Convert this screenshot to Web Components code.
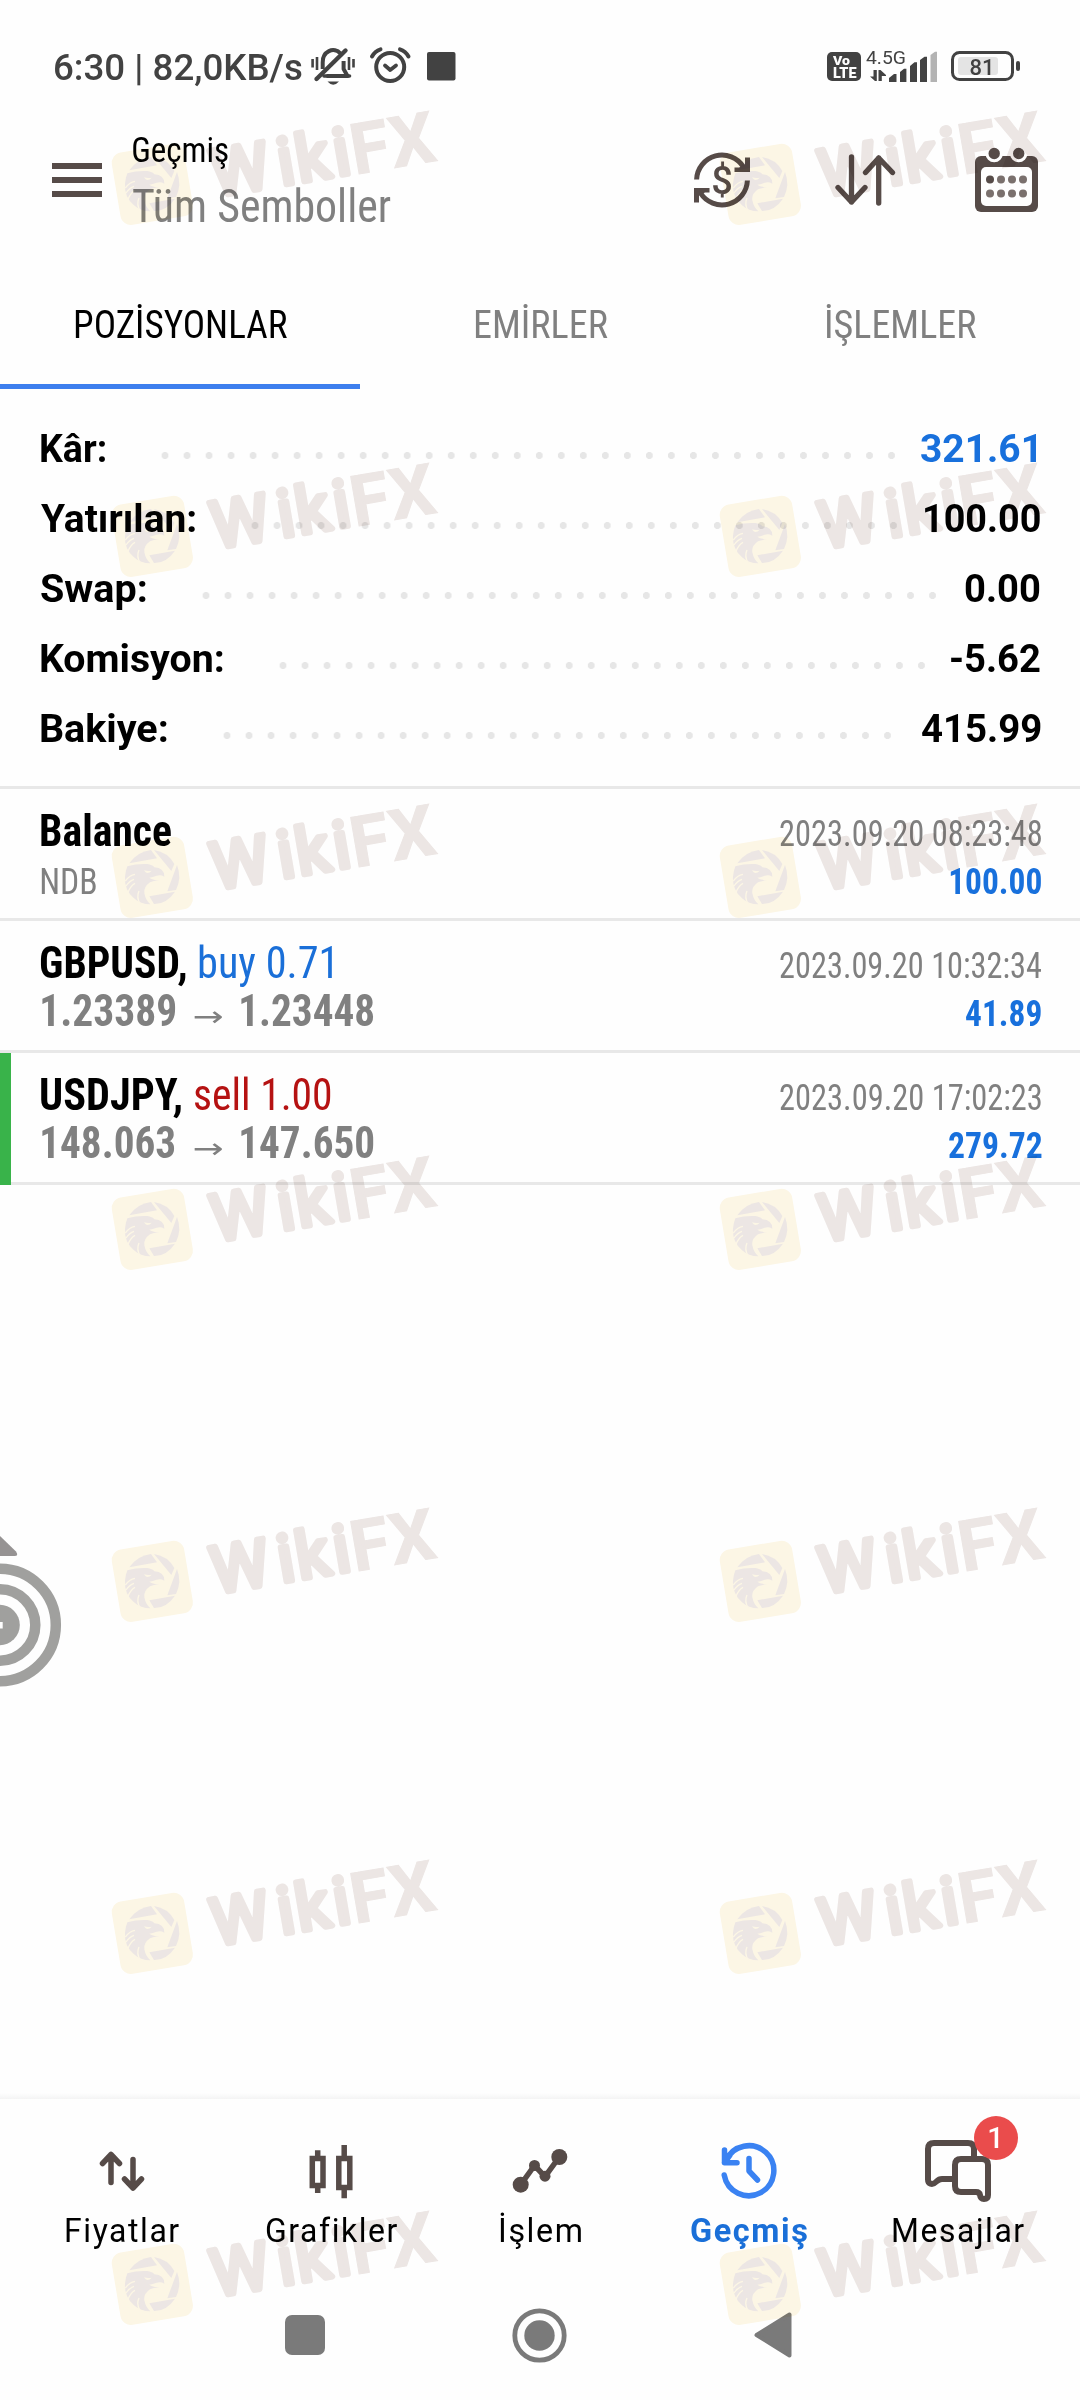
<!DOCTYPE html>
<html lang="tr">
<head>
<meta charset="utf-8">
<title>Geçmiş</title>
<style>
    body {
        margin: 0;
        background: #fefefe;
        font-family: Roboto, "Liberation Sans", sans-serif;
        color: #000;
    }
</style>
</head>
<body>
<history-page></history-page>

<script>
// Text squeezed so that its glyphs fill exactly `w` pixels
class FitText extends HTMLElement {
    constructor() {
        super();
        this.attachShadow({ mode: 'open' });
        this.shadowRoot.innerHTML = `
            <style>
                :host { display: block; flex: none; white-space: nowrap; }
                span { display: inline-block; transform-origin: 0 0; }
            </style>
            <span><slot></slot></span>
        `;
    }

    connectedCallback() {
        const width = parseFloat(this.getAttribute('w'));
        const style = getComputedStyle(this);
        const ctx = document.createElement('canvas').getContext('2d');
        const stretch = style.fontStretch === '75%' ? 'condensed' : 'normal';
        ctx.font = `${style.fontWeight} ${style.fontSize} ${style.fontFamily}`;
        ctx.fontStretch = stretch;
        const spacing = parseFloat(style.letterSpacing) || 0;
        const text = this.textContent;
        const m = ctx.measureText(text);
        const ink = m.actualBoundingBoxLeft + m.actualBoundingBoxRight + spacing * (text.length - 1);
        const scale = width / ink;
        this.style.width = width + 'px';
        this.shadowRoot.querySelector('span').style.transform =
            `translateX(${m.actualBoundingBoxLeft * scale}px) scaleX(${scale})`;
    }
}
customElements.define('fit-text', FitText);

class StatusBar extends HTMLElement {
    constructor() {
        super();
        this.attachShadow({ mode: 'open' });
        this.shadowRoot.innerHTML = `
            <style>
                :host {
                    display: flex; align-items: flex-start; height: 100px; box-sizing: border-box;
                    padding: 47px 60px 0 55px; color: #424242;
                }
                svg { display: block; flex: none; overflow: visible; }
                .clock { font-size: 36.5px; line-height: 42px; font-weight: 480; margin-right: 9px; }
                .bell { margin: 1px 15px 0 0; }
                .alarm { margin-right: 16px; }
                .right { margin: 3px 0 0 auto; }
            </style>
            <fit-text class="clock" w="247">6:30 | 82,0KB/s</fit-text>
            <svg class="bell" width="44" height="38" fill="none" stroke="#424242" stroke-width="4">
                <path d="M11.7 21V14.5A10.5 12 0 0 1 29.5 5.5M32.6 13V21L36.5 28H15.5" stroke-linejoin="round"/>
                <path d="M5.5 31 34.5 2.5" stroke-width="4.4" stroke-linecap="round"/>
                <path d="M13 28H38.5" stroke-width="3.6" stroke-linecap="round"/>
                <path d="M16.5 33.5H28Q22.2 40 16.5 33.5Z" fill="#424242" stroke="none"/>
                <path d="M1.6 11V19.5M6 9V22M38 9V22M42.5 11V19.5" stroke-width="2.6"/>
            </svg>
            <svg class="alarm" width="41" height="37" fill="none" stroke="#424242" stroke-linecap="round">
                <circle cx="20.2" cy="20" r="14" stroke-width="4"/>
                <path d="M15 18.5 20.2 23 26 18.5" stroke-width="3.8" stroke-linejoin="round"/>
                <path d="M2 9.5Q5 4 10.5 2.3M38.5 9.5Q35.5 4 30 2.3" stroke-width="4"/>
            </svg>
            <svg width="29" height="34"><rect y="5" width="28.5" height="28.5" rx="2" fill="#424242"/></svg>
            <svg class="right" width="193" height="32" font-family="Roboto, sans-serif" fill="#424242">
                <rect x="0" y="2" width="34" height="29" rx="5"/>
                <text x="6" y="14.7" font-size="13.5" font-weight="900" fill="#fefefe" textLength="17" lengthAdjust="spacingAndGlyphs">Vo</text>
                <text x="6" y="28" font-size="14" font-weight="900" fill="#fefefe" textLength="23.5" lengthAdjust="spacingAndGlyphs">LTE</text>
                <text x="39" y="14" font-size="19" textLength="40" lengthAdjust="spacingAndGlyphs">4.5G</text>
                <path d="M46.5 20H49.8V31H48L43 26.5H46.5ZM51.5 20H53.5L59 25V26H54.8V31H51.5Z"/>
                <path d="M62 32V28L67 24H69.5V32ZM73 32V22L77 18.7H79.4V32ZM83 32V16L87.5 12.3H90V32ZM93 32V10L97.5 6.7H100V32Z"/>
                <path d="M103.5 32V5L108 1.7H110V32Z" fill="#b3b3b3"/>
                <rect x="131" y="7" width="40" height="18" rx="3" fill="#e4e4e4"/>
                <rect x="125.5" y="2.5" width="60" height="27" rx="7" fill="none" stroke="#424242" stroke-width="3"/>
                <rect x="189" y="11" width="4" height="10" rx="2"/>
                <text x="142.5" y="25" font-size="22.5" font-weight="500" textLength="25" lengthAdjust="spacingAndGlyphs">81</text>
            </svg>
        `;
    }
}
customElements.define('status-bar', StatusBar);

class AppHeader extends HTMLElement {
    constructor() {
        super();
        this.attachShadow({ mode: 'open' });
        this.shadowRoot.innerHTML = `
            <style>
                :host {
                    display: flex; align-items: center; height: 160px; box-sizing: border-box;
                    padding: 0 42px 0 52px;
                }
                svg { display: block; flex: none; overflow: visible; }
                .titles {
                    flex: 1; margin-left: 31px; display: flex; flex-direction: column; gap: 10px;
                    padding-top: 2px; font-stretch: condensed;
                }
                .title { font-size: 35.5px; line-height: 40px; }
                .sub { font-size: 46.5px; line-height: 52px; font-weight: 430; color: #808080; }
                .sort { margin: 0 80px 0 85px; }
            </style>
            <svg width="50" height="34" fill="#564b48">
                <path d="M0 0H50V6H0ZM0 14H50V20H0ZM0 28H50V34H0Z"/>
            </svg>
            <div class="titles">
                <fit-text class="title" w="95">Geçmiş</fit-text>
                <fit-text class="sub" w="258">Tüm Semboller</fit-text>
            </div>
            <svg width="56" height="56" fill="none" stroke="#564b48" stroke-width="5">
                <g id="half">
                    <path d="M2.6 27.5A25.4 25.4 0 0 1 49.5 15"/>
                    <path d="M51 5.5H56V20H40.5V15.5H45L51 12.5Z" fill="#564b48" stroke="none"/>
                </g>
                <use href="#half" transform="rotate(180 28 28)"/>
                <text x="28" y="41.5" text-anchor="middle" font-size="38" fill="#564b48" stroke="none" font-weight="500">$</text>
            </svg>
            <svg class="sort" width="60" height="52" fill="none" stroke="#564b48" stroke-width="5.3" stroke-linecap="round" stroke-linejoin="round">
                <path d="M16.5 3V48M3 33.5 16.5 48 30 33.5M43.7 49V4M30.5 18.5 43.7 4 57.5 18.5"/>
            </svg>
            <svg width="63" height="66">
                <rect y="9" width="63" height="56" rx="6" fill="#564b48"/>
                <rect x="6" y="20" width="51" height="39" rx="5" fill="#fefefe"/>
                <g fill="#564b48" stroke="#fefefe" stroke-width="3">
                    <circle cx="19.2" cy="6.5" r="7.2"/>
                    <circle cx="43.7" cy="6.5" r="7.2"/>
                </g>
                <g fill="#7a706d">
                    <circle cx="15" cy="32.5" r="4" fill="#564b48"/><circle cx="26" cy="32.5" r="4"/>
                    <circle cx="37" cy="32.5" r="4"/><circle cx="48" cy="32.5" r="4"/>
                    <circle cx="15" cy="46.5" r="4"/><circle cx="26" cy="46.5" r="4"/>
                    <circle cx="37" cy="46.5" r="4"/><circle cx="48" cy="46.5" r="4"/>
                </g>
            </svg>
        `;
    }
}
customElements.define('app-header', AppHeader);

class TabItem extends HTMLElement {
    constructor() {
        super();
        this.attachShadow({ mode: 'open' });
        this.shadowRoot.innerHTML = `
            <style>
                :host {
                    flex: 1; display: flex; justify-content: center; box-sizing: border-box; height: 129px;
                    padding: 40px 0 0 2px; font-size: 38.5px; line-height: 50px; color: #808080;
                    font-stretch: condensed;
                    border-bottom: 5px solid transparent;
                }
                :host([active]) { color: #000; border-color: #3d7fee; }
            </style>
            <slot></slot>
        `;
    }
}
customElements.define('tab-item', TabItem);

class SummaryRow extends HTMLElement {
    constructor() {
        super();
        this.attachShadow({ mode: 'open' });
        this.shadowRoot.innerHTML = `
            <style>
                :host {
                    display: flex; align-items: center; height: 70px; padding: 0 40px 0 41px;
                    font-size: 38px; line-height: 70px; font-weight: 700;
                }
                .dots {
                    height: 7px; margin: 13px 0 0 48.5px; flex: none;
                    width: calc(var(--dots) * 22.02px);
                    background: radial-gradient(circle at center, #e6e6e6 3.2px, transparent 3.8px) 0 0 / 22.02px 7px repeat-x;
                }
                .value { margin-left: auto; }
            </style>
            <slot name="label"></slot>
            <div class="dots"></div>
            <div class="value"><slot></slot></div>
        `;
    }

    connectedCallback() {
        this.style.setProperty('--dots', this.getAttribute('dots'));
    }
}
customElements.define('summary-row', SummaryRow);

class DealRow extends HTMLElement {
    constructor() {
        super();
        this.attachShadow({ mode: 'open' });
        this.shadowRoot.innerHTML = `
            <style>
                :host {
                    display: block; box-sizing: border-box; height: 132px; padding: 17px 39px 0 41px;
                    background: linear-gradient(#e8e8e8, #e8e8e8) 0 100% / 100% 3px no-repeat;
                    font-size: 44px; line-height: 50px; font-stretch: condensed;
                }
                :host([marked]) {
                    background: linear-gradient(#39b34a, #39b34a) 0 0 / 11px 100% no-repeat,
                        linear-gradient(#e8e8e8, #e8e8e8) 0 100% / 100% 3px no-repeat;
                }
                .line { display: flex; align-items: baseline; height: 48px; }
                .line::before { content: ''; width: 0; height: 40px; }
                .end { margin-left: auto; font-size: 36.5px; color: #808080; font-weight: 430; }
                .profit { font-weight: 700; color: #1870dc; }
            </style>
            <div class="line"><slot name="title"></slot><div class="end"><slot name="time"></slot></div></div>
            <div class="line"><slot name="detail"></slot><div class="end profit"><slot name="profit"></slot></div></div>
        `;
    }
}
customElements.define('deal-row', DealRow);

class NavItem extends HTMLElement {
    constructor() {
        super();
        this.attachShadow({ mode: 'open' });
        this.shadowRoot.innerHTML = `
            <style>
                :host {
                    flex: 1; display: flex; flex-direction: column; align-items: center; position: relative;
                    font-size: 33px; line-height: 44px; letter-spacing: 1.6px; color: #000; --icon: #564b48;
                }
                :host([active]) { color: #1a6fd8; font-weight: 700; --icon: #3a82f2; }
                .icon { height: 74px; }
                .badge {
                    display: none; position: absolute; left: 120px; top: -19px; width: 44px; height: 44px;
                    border-radius: 50%; background: #ea4c4c; color: #fff; text-align: center;
                    font-size: 29px; font-weight: 550; letter-spacing: 0;
                }
                :host([badge]) .badge { display: block; }
            </style>
            <div class="icon"><slot name="icon"></slot></div>
            <slot></slot>
            <div class="badge"></div>
        `;
    }

    connectedCallback() {
        this.shadowRoot.querySelector('.badge').textContent = this.getAttribute('badge') || '';
    }
}
customElements.define('nav-item', NavItem);

class SystemBar extends HTMLElement {
    constructor() {
        super();
        this.attachShadow({ mode: 'open' });
        this.shadowRoot.innerHTML = `
            <style>
                :host {
                    display: flex; align-items: center; gap: 187px; height: 141px; box-sizing: border-box;
                    padding: 11px 0 0 285px;
                }
                svg { display: block; flex: none; }
            </style>
            <svg width="40" height="40"><rect width="40" height="40" rx="7" fill="#7a7a7a"/></svg>
            <svg width="55" height="55">
                <circle cx="27.5" cy="27.5" r="24.7" fill="none" stroke="#7a7a7a" stroke-width="4.8"/>
                <circle cx="27.5" cy="27.5" r="15.2" fill="#7a7a7a"/>
            </svg>
            <svg width="38" height="46">
                <path d="M2.5 23 35.5 2.5V43.5Z" fill="#7a7a7a" stroke="#7a7a7a" stroke-width="4" stroke-linejoin="round"/>
            </svg>
        `;
    }
}
customElements.define('system-bar', SystemBar);

// Half of the floating button, docked at the left edge of the screen
class FloatButton extends HTMLElement {
    constructor() {
        super();
        this.attachShadow({ mode: 'open' });
        this.shadowRoot.innerHTML = `
            <style>
                :host { display: block; position: absolute; left: 0; top: 1530px; }
                svg { display: block; }
            </style>
            <svg width="64" height="160">
                <path d="M0 6 16 21.5Q19 26 14.5 26H0Z" fill="#969393"/>
                <g fill="none" stroke="#a0a09e" stroke-width="10.5">
                    <circle cx="-.5" cy="95" r="56.3"/>
                    <circle cx="-.5" cy="95" r="35.8"/>
                </g>
                <circle cx="-.5" cy="95" r="20.3" fill="#a0a09e"/>
                <path d="M0 92H2.7V98.5H0Z" fill="#fefefe"/>
            </svg>
        `;
    }
}
customElements.define('float-button', FloatButton);

class WikiMark extends HTMLElement {
    constructor() {
        super();
        this.attachShadow({ mode: 'open' });
        this.shadowRoot.innerHTML = `
            <style>
                :host { display: block; position: absolute; mix-blend-mode: multiply; pointer-events: none; }
                svg { display: block; }
            </style>
            <svg width="360" height="150" viewBox="0 0 1080 450" fill="#ede7e5">
                <rect x="47" y="164" width="220" height="220" rx="32" transform="rotate(-9.5 157 274)" fill="#fdf7e6"/>
                <path d="M88 232Q112 197 153 192L171 217Z"/>
                <path d="M162 192Q203 198 223 234L214 255Z"/>
                <path d="M231 237Q246 275 228 312L202 316Z"/>
                <path d="M148 331 225 317Q199 355 162 354Z"/>
                <path d="M82 241Q112 232 142 234Q157 236 163 244Q193 246 193 272Q183 266 170 269Q158 274 148 275Q156 282 178 283Q160 285 150 289Q130 303 133 322Q137 343 151 355Q122 355 102 337Q72 310 75 272Q77 254 82 241Z"/>
                <path d="M132 253Q144 257 155 254Q146 264 137 259Z" fill="#fdf7e6"/>
                <path d="M76 285Q88 268 105 265M78 300Q88 285 102 280M84 319Q92 299 105 292M121 354Q108 335 117 315" fill="none" stroke="#fdf7e6" stroke-width="4"/>
                <text transform="translate(778 244) rotate(-9.7)" font-family="Roboto, sans-serif" stroke="#ede7e5"><tspan x="-438 -236 -180 -66" y="-7" font-size="196" font-weight="400" stroke-width="17" stroke-linejoin="round">Wiki</tspan><tspan x="-14 106" y="-1" font-size="212" font-weight="700" stroke-width="3">FX</tspan></text>
            </svg>
        `;
    }

    connectedCallback() {
        this.style.left = this.getAttribute('x') + 'px';
        this.style.top = this.getAttribute('y') + 'px';
    }
}
customElements.define('wiki-mark', WikiMark);

class HistoryPage extends HTMLElement {
    constructor() {
        super();
        this.attachShadow({ mode: 'open' });
        const marks = [93, 445, 786, 1138, 1490, 1842, 2193]
            .map(y => `<wiki-mark x="100" y="${y}"></wiki-mark><wiki-mark x="708" y="${y}"></wiki-mark>`)
            .join('');
        this.shadowRoot.innerHTML = `
            <style>
                :host {
                    display: flex; flex-direction: column; position: relative; overflow: hidden;
                    width: 1080px; height: 2400px; background: #fefefe;
                }
                .tabs { display: flex; }
                .summary { padding: 25px 0 22px; }
                .deals { border-top: 3px solid #e8e8e8; flex: 1; }
                .pos { color: #1870dc; }
                .up { margin-right: 4px; }
                .symbol { font-weight: 700; }
                .buy { margin-left: 13px; color: #1a6fd8; font-weight: 430; }
                .sell { margin-left: 13px; color: #b51212; font-weight: 430; }
                .note { font-size: 36px; color: #808080; }
                .prices { display: flex; align-items: baseline; font-weight: 700; color: #808080; padding-left: 1px; }
                .arrow { margin: 0 19px; font-weight: 400; font-size: 28px; font-family: "DejaVu Sans", sans-serif; }
                .shade { height: 6px; background: linear-gradient(#fefefe, #f4f4f4); }
                .nav { display: flex; height: 160px; box-sizing: border-box; padding: 36px 17.5px 0; }
                .nav svg { display: block; overflow: visible; fill: none; stroke: var(--icon); stroke-width: 5.5; stroke-linecap: round; stroke-linejoin: round; }
            </style>
            <status-bar></status-bar>
            <app-header></app-header>
            <div class="tabs">
                <tab-item active><fit-text w="212">POZİSYONLAR</fit-text></tab-item>
                <tab-item><fit-text w="132.5">EMİRLER</fit-text></tab-item>
                <tab-item><fit-text w="150">İŞLEMLER</fit-text></tab-item>
            </div>
            <div class="summary">
                <summary-row dots="34"><fit-text slot="label" w="64.5">Kâr:</fit-text><fit-text class="pos up" w="115">321.61</fit-text></summary-row>
                <summary-row dots="30"><fit-text slot="label" w="154.5">Yatırılan:</fit-text><fit-text w="115.5">100.00</fit-text></summary-row>
                <summary-row dots="34"><fit-text slot="label" w="105">Swap:</fit-text><fit-text w="75">0.00</fit-text></summary-row>
                <summary-row dots="30"><fit-text slot="label" w="182">Komisyon:</fit-text><fit-text w="89">-5.62</fit-text></summary-row>
                <summary-row dots="31"><fit-text slot="label" w="126">Bakiye:</fit-text><fit-text w="118.5">415.99</fit-text></summary-row>
            </div>
            <div class="deals">
                <deal-row>
                    <fit-text slot="title" class="symbol" w="130">Balance</fit-text>
                    <fit-text slot="time" w="261">2023.09.20 08:23:48</fit-text>
                    <fit-text slot="detail" class="note" w="55">NDB</fit-text>
                    <fit-text slot="profit" w="91">100.00</fit-text>
                </deal-row>
                <deal-row>
                    <fit-text slot="title" class="symbol" w="145">GBPUSD,</fit-text>
                    <fit-text slot="title" class="buy" w="133">buy 0.71</fit-text>
                    <fit-text slot="time" w="261">2023.09.20 10:32:34</fit-text>
                    <div slot="detail" class="prices"><fit-text w="133">1.23389</fit-text><fit-text class="arrow" w="28">→</fit-text><fit-text w="133">1.23448</fit-text></div>
                    <fit-text slot="profit" w="75">41.89</fit-text>
                </deal-row>
                <deal-row marked>
                    <fit-text slot="title" class="symbol" w="140.5">USDJPY,</fit-text>
                    <fit-text slot="title" class="sell" w="136">sell 1.00</fit-text>
                    <fit-text slot="time" w="261">2023.09.20 17:02:23</fit-text>
                    <div slot="detail" class="prices"><fit-text w="133">148.063</fit-text><fit-text class="arrow" w="28">→</fit-text><fit-text w="133">147.650</fit-text></div>
                    <fit-text slot="profit" w="92.5">279.72</fit-text>
                </deal-row>
            </div>
            <div class="shade"></div>
            <div class="nav">
                <nav-item>
                    <svg slot="icon" width="80" height="73"><path d="M29 47.5V19.5M20.5 28.5 29 19.5 37.5 28.5M51 24.5V53M42.5 44 51 53 59.5 44"/></svg>
                    <fit-text w="113">Fiyatlar</fit-text>
                </nav-item>
                <nav-item>
                    <svg slot="icon" width="80" height="73" style="stroke-linecap:butt;stroke-linejoin:miter"><path d="M21.3 23.5H32V50.5H21.3ZM26.7 15.3V21M26.7 53V58M47.8 23.5H58.8V52.5H47.8ZM53.2 10V21M53.2 55V63.3"/></svg>
                    <fit-text w="130">Grafikler</fit-text>
                </nav-item>
                <nav-item>
                    <svg slot="icon" width="80" height="73">
                        <path d="M20.7 49.7 34.5 30.5 45 41.7 59.3 22"/>
                        <g fill="#564b48" stroke="none"><circle cx="20.7" cy="49.7" r="8"/><circle cx="34.5" cy="30.5" r="5.5"/><circle cx="45" cy="41.2" r="5.5"/><circle cx="59.3" cy="22" r="8"/></g>
                    </svg>
                    <fit-text w="81">İşlem</fit-text>
                </nav-item>
                <nav-item active>
                    <svg slot="icon" width="80" height="73"><path d="M15.2 40A25 25 0 1 0 17 25.5M15.5 15V27.7H28M15.5 27.5 21 20M40 23.5V36L48.5 45"/></svg>
                    <fit-text w="116">Geçmiş</fit-text>
                </nav-item>
                <nav-item badge="1">
                    <svg slot="icon" width="80" height="73" style="stroke-width:6"><path d="M36 44H24Q21 44 18.5 46.5C14 51 10 48.5 10 44.5V14Q10 8 16 8H50Q56 8 56 14V22M43 24H64Q70 24 70 30V60Q70 64 66 64Q62.5 64 62 60Q61.5 57 58 57H43Q37 57 37 51V30Q37 24 43 24Z"/></svg>
                    <fit-text w="131">Mesajlar</fit-text>
                </nav-item>
            </div>
            <system-bar></system-bar>
            <float-button></float-button>
            ${marks}
        `;
    }
}
customElements.define('history-page', HistoryPage);
</script>
</body>
</html>
